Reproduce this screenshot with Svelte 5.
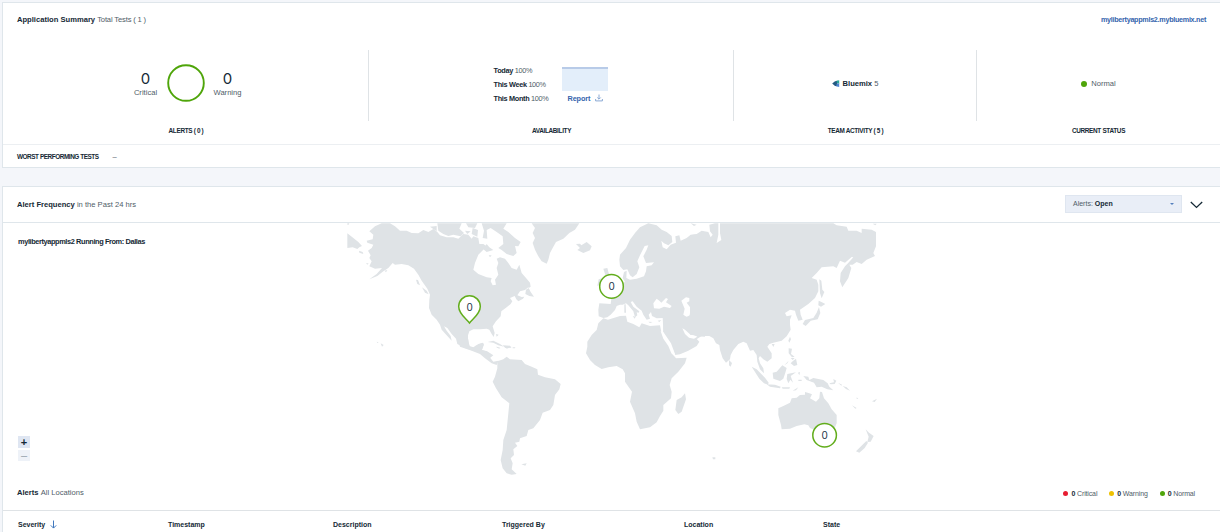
<script>
  const columns = ['Severity', 'Timestamp', 'Description', 'Triggered By', 'Location', 'State'];
  const legend = [
    { label: 'Critical', kind: 'critical' },
    { label: 'Warning', kind: 'warning' },
    { label: 'Normal', kind: 'normal' }
  ];
  const availability = ['Today', 'This Week', 'This Month'];
</script>

<main>
  <section class="card summary">
    <header>
      <h2>Application Summary <span class="tests">Total Tests ( 1 )</span></h2>
      <a class="host" href="#app">mylibertyappmls2.mybluemix.net</a>
    </header>
    <div class="metrics">
      <div class="metric">
        <div class="body alerts">
          <div class="count"><b>0</b><span>Critical</span></div>
          <svg class="ring" width="38" height="38" viewBox="0 0 38 38"><circle cx="19" cy="19" r="17.8" /></svg>
          <div class="count warn"><b>0</b><span>Warning</span></div>
        </div>
        <h3>ALERTS ( 0 )</h3>
      </div>
      <div class="metric">
        <div class="body avail">
          <ul>
            {#each availability as period}
              <li><b>{period}</b> 100%</li>
            {/each}
          </ul>
          <div class="trend">
            <div class="spark"></div>
            <a href="#app">Report
              <svg width="8" height="8" viewBox="0 0 8 8"><path d="M4 .5V5M2.3 3.5 4 5.2 5.7 3.5M.6 5V6.9H7.4V5" /></svg>
            </a>
          </div>
        </div>
        <h3>AVAILABILITY</h3>
      </div>
      <div class="metric">
        <div class="body team">
          <svg width="8" height="8" viewBox="0 0 8 8">
            <path fill="#245a82" d="M.2 3.5 3 1.2 5.5.7V6.3L3 6Z" />
            <path fill="#29a79a" d="M4.5.8 7.2.2V3.8L5 3Z" />
            <path fill="#4c83d2" d="M4.5 4.3 7.2 3.3V7L4.2 6.3Z" />
          </svg>
          <span><b>Bluemix</b> 5</span>
        </div>
        <h3>TEAM ACTIVITY ( 5 )</h3>
      </div>
      <div class="metric">
        <div class="body status"><i class="dot normal"></i><span>Normal</span></div>
        <h3>CURRENT STATUS</h3>
      </div>
    </div>
    <footer><b>WORST PERFORMING TESTS</b><span>–</span></footer>
  </section>

  <section class="card frequency">
    <header>
      <h2>Alert Frequency <span>in the Past 24 hrs</span></h2>
      <div class="tools">
        <button class="select"><span>Alerts: <b>Open</b></span><i></i></button>
        <svg width="13" height="8" viewBox="0 0 13 8"><path d="M.8 1 6.5 6.4 12.2 1" /></svg>
      </div>
    </header>
    <div class="map-area">
      <div class="side">
        <b>mylibertyappmls2 Running From: Dallas</b>
        <div class="zoom"><button>+</button><button class="off">–</button></div>
      </div>
      <svg class="map" width="530" height="253" viewBox="347 223 530 253">
        <!-- North America -->
        <g transform="translate(340 218) scale(.33333)">
          <path d="M22 46 40 60 55 72 66 84 58 88 52 93 38 88 22 90ZM57 98 68 102 70 108 58 104Z" />
          <path d="M125 16 105 25 88 40 100 50 98 64 80 68 82 74 100 80 95 90 84 98 92 112 88 120 95 130 88 145 105 152 126 150 110 168 88 184 112 174 130 160 145 150 158 135 165 140 185 138 205 142 222 152 235 170 245 188 262 212 270 230 268 245 267 270 275 290 290 305 300 320 305 335 320 352 335 368 332 354 320 338 312 325 322 330 335 348 348 362 352 378 375 390 400 398 420 400 432 412 450 420 460 412 445 402 426 396 431 382 428 375 415 378 405 390 390 386 384 370 384 352 388 340 400 334 420 334 440 332 448 335 455 348 461 357 464 345 458 325 468 310 482 295 484 280 500 268 512 258 517 250 510 240 524 234 529 244 535 250 549 242 553 236 545 237 532 232 540 220 555 216 565 208 572 222 582 236 568 234 556 228 558 215 572 206 570 194 560 182 545 165 538 140 530 155 515 150 505 135 495 122 480 118 470 122 475 135 470 150 475 170 465 185 468 200 458 202 452 190 455 180 440 178 415 168 400 155 405 135 415 110 430 95 440 85 430 78 418 78 415 60 400 55 395 62 385 50 370 48 355 62 340 58 320 58 300 52 292 42 280 33 265 42 250 36 235 46 215 45 200 38 180 38 165 25 150 16Z" />
          <path d="M292 16H365L358 32 372 45 362 55 340 50 325 54 310 48 295 38ZM270 26 290 24 290 40ZM378 16H412L405 30 385 28ZM375 38 392 40 382 48ZM398 30 414 36 412 56 395 48Z" />
          <path d="M425 16H500L490 32 505 42 525 60 542 72 535 85 525 84 530 105 520 114 500 108 485 96 475 90 490 78 488 55 470 42 452 30 440 36 442 62 428 60 432 38ZM430 94 440 78 448 88 460 96 440 102ZM446 112 455 112 450 118Z" />
          <path d="M443 372 460 368 480 378 492 386 475 382 460 374ZM494 383 515 387 500 392ZM474 388 482 390 476 392ZM518 388H526L525 391H518ZM228 185 234 186 240 202 232 198ZM246 208 260 218 266 229 255 224ZM134 158 142 156 138 163ZM110 371 116 373 112 375ZM122 376 131 381 126 386ZM468 348 476 350 470 356ZM22 16H28L26 20H22ZM78 136 86 136 82 140Z" />
        </g>
        <!-- Central and South America -->
        <g transform="translate(460 340) scale(.33333)">
          <path d="M-6-2 25-2 28 18 40 22 50 15 68 8 72 12 65 30 82 34 88 50 100 65 115 62 110 75 95 70 75 55 60 42 35 32 0 20Z" />
          <path d="M112 64 130 58 140 50 150 58 185 60 195 72 215 80 232 88 234 104 255 112 285 118 302 132 298 148 285 165 280 195 270 210 248 218 240 240 220 265 205 270 200 288 180 295 178 305 165 308 172 318 160 328 162 345 152 355 158 370 155 388 170 402 155 404 140 400 128 385 122 360 128 330 130 300 140 270 145 220 148 190 125 172 108 145 98 125 105 110 112 85Z" />
          <path d="M184 373 200 370 196 377ZM128 16 150 17 154 23 136 24ZM108 20 120 22 112 24Z" />
        </g>
        <!-- Greenland, Iceland and Europe -->
        <g transform="translate(520 218) scale(.33333)">
          <path d="M35 16H178L165 35 148 45 130 62 108 72 98 90 90 105 85 125 80 137 65 130 55 115 45 95 38 75 45 60 38 45 45 30Z" />
          <path d="M168 78 180 77 184 82 200 72 215 85 210 97 190 105 172 96 180 90ZM250 152 262 150 266 165 272 180 282 195 280 208 256 210 262 190ZM236 184 248 180 248 200 232 203Z" />
          <path d="M298 125 300 110 318 90 330 65 345 45 360 28 385 16 410 22 425 35 440 42 455 54 457 72 445 82 432 76 424 68 428 88 440 94 452 80 468 74 466 55 478 52 482 68 500 60 512 50 545 48V354L520 370 430 370V300L410 301 396 294 393 282 386 290 390 302 380 305 370 290 365 278 350 266 338 250 332 252 340 266 358 280 356 284 350 283 352 292 345 298 340 280 325 262 318 256 308 260 300 260 290 264 285 276 272 290 262 298 250 300 236 295 235 275 238 256 272 258 274 242 262 228 280 220 300 200 315 192 308 180 312 162 320 158 319 180 330 185 350 182 372 175 378 160 380 145 395 142 402 133 378 135 370 115 380 95 385 82 374 84 360 112 352 130 358 148 350 168 338 178 330 172 322 154 310 156 300 145Z" />
          <path d="M313 259 317 259 318 284 313 284ZM338 294 347 296 344 302ZM385 311 398 312 390 315ZM413 308 424 306 418 312ZM512 16 530 20 522 24Z" />
          <path class="sea" d="M400 256 410 242 418 248 424 254 438 240 444 243 438 253 455 264 450 270 432 266 418 272 402 271ZM484 248 498 238 508 240 508 250 500 254 512 270 509 292 500 297 490 290 494 272Z" />
        </g>
        <!-- Africa, Arabia and Madagascar -->
        <g transform="translate(570 310) scale(.33333)">
          <path d="M100 25 114 29 150 18 168 17 172 35 190 42 208 52 215 40 240 48 270 46 274 66 290 90 305 120 318 145 350 143 345 160 325 185 305 205 299 225 305 245 303 265 280 285 280 302 270 318 260 337 240 352 210 358 200 335 195 310 180 275 186 245 165 215 165 190 158 178 140 168 115 172 95 177 75 165 60 150 48 130 52 110 52 95 65 75 80 60 85 40Z" />
          <path d="M278 20 280 66 293 85 305 110 315 135 330 133 355 122 380 108 388 95 375 82 360 82 345 70 338 53 345 58 360 72 380 79 405 80V20ZM345 250 348 268 335 305 325 312 316 300 320 270 335 262Z" />
          <path class="sea" d="M272 64 280 66 303 100 315 132 318 144 304 130 295 108 280 86ZM337 55 345 59 360 73 373 76 382 80 372 86 357 83 345 72Z" />
        </g>
        <!-- Asia -->
        <g transform="translate(690 218) scale(.33333)">
          <path d="M0 52 20 48 35 38 55 42 62 58 68 50 60 40 58 20 75 16H85V50L80 75 94 66 90 45 90 16H430L440 22 470 26 475 38 500 38 515 45 515 32 545 35 558 42 558 85 550 105 555 114 530 125 515 138 500 132 488 140 478 140 484 150 475 180 457 208 450 190 452 165 465 145 474 136 490 118 485 117 465 134 450 128 440 150 430 145 395 148 380 165 365 180 380 185 385 200 385 220 375 240 355 258 330 275 332 290 338 305 325 308 318 290 315 278 300 275 285 285 290 295 305 292 300 305 300 320 302 335 290 355 275 368 250 374 238 378 232 386 245 406 245 421 232 431 220 424 210 414 206 421 210 436 220 451 222 466 210 454 202 431 200 411 190 396 180 398 170 376 160 371 145 378 130 396 122 411 120 424 108 434 98 421 90 396 88 381 78 376 70 361 58 354 30 354 0 350Z" />
          <path d="M388 184 394 188 397 215 403 222 395 241 390 225ZM386 248 393 251 406 258 393 266 385 262ZM387 267 391 285 383 304 362 308 347 324 338 318 345 306 370 300 380 284ZM548 17H560L556 22Z" />
        </g>
        <!-- South-east Asia and Oceania -->
        <g transform="translate(690 330) scale(.33333)">
          <path d="M300 20 303 28 298 38 295 32ZM245 42H254L250 51ZM296 55 306 56 303 72 314 80 306 82 296 70ZM308 94 318 86 322 105 312 108 302 100ZM283 106 296 92 292 100ZM302 84 314 84 308 90ZM117 90 126 99 122 110 117 106ZM185 110 200 118 225 143 236 158 234 164 222 160 208 146ZM230 163 255 164 272 170 270 175 240 170ZM248 128 260 125 277 106 290 114 286 128 280 146 270 153 250 146ZM292 132 318 127 302 138 309 158 301 149 295 160 290 147ZM275 172H300L298 176H278ZM308 182 325 172 318 181ZM324 128 330 126 328 136ZM325 149H335V153H325ZM340 138 355 140 358 150 370 144 400 150 413 160 418 170 430 181 412 178 395 170 380 172 372 158 350 150ZM418 160 432 157 430 147 439 152 434 162 422 163ZM444 158 456 164 454 167ZM458 168 470 172 480 182 468 177ZM486 226 500 234 496 236ZM546 214 561 206 554 216ZM500 202 505 206 500 207ZM67 382H76V388H69Z" />
          <path d="M265 235 280 228 300 218 305 205 320 203 330 195 345 194 345 186 358 190 366 193 360 205 378 215 388 205 390 185 396 186 402 205 415 220 425 238 440 255 440 280 430 304 414 322 388 316 375 300 360 294 355 286 343 283 320 288 300 296 275 298 273 285 265 255ZM527 298 537 308 551 318 542 335 532 336 536 320ZM529 333 534 338 524 354 508 368 498 364Z" />
        </g>
        <!-- Test locations -->
        <path class="pin" d="M469.5 323C466 318.5 458.7 314 458.7 306.5A10.8 10.8 0 0 1 480.3 306.5C480.3 314 473 318.5 469.5 323Z" />
        <circle class="pin" cx="611.5" cy="286.4" r="11.8" />
        <circle class="pin" cx="824.6" cy="435.2" r="11.8" />
        <text x="469.6" y="310.8">0</text>
        <text x="611.6" y="290.3">0</text>
        <text x="824.6" y="439.2">0</text>
      </svg>
    </div>
    <div class="list-head">
      <h2>Alerts <span>All Locations</span></h2>
      <div class="legend">
        {#each legend as item}
          <span><i class="dot {item.kind}"></i><b>0</b> {item.label}</span>
        {/each}
      </div>
    </div>
    <div class="thead">
      {#each columns as column, i}
        <b>{column}{#if i === 0}<svg width="7" height="9" viewBox="0 0 7 9"><path d="M3.5.5V8M.8 5.4 3.5 8.1 6.2 5.4" /></svg>{/if}</b>
      {/each}
    </div>
  </section>
</main>

<style>
  :global(body) { background: #f4f6fa; overflow: hidden; }
  main {
    height: 532px; box-sizing: border-box; padding: 2px 0 0 2px; overflow: hidden;
    font: 7.6px/10px "Liberation Sans", Arial, sans-serif; color: #4f5d68;
  }
  b, h2, h3 { color: #152935; font-weight: 700; }
  h2, h3, ul { margin: 0; padding: 0; }
  h2 { font-size: 7.6px; line-height: 10px; }
  h2 span { font-weight: 400; color: #4f5d68; }
  .tests { letter-spacing: -.15px; }
  a { color: #3564ad; font-weight: 700; text-decoration: none; }
  button { border: 0; padding: 0; font: inherit; color: inherit; }
  svg { display: block; flex: none; }
  .card { background: #fff; border: 1px solid #dfe6eb; border-right: 0; box-sizing: border-box; }
  .summary { height: 166px; margin-bottom: 18px; }
  .summary header { height: 47px; padding: 12px 14px 0; box-sizing: border-box; display: flex; justify-content: space-between; }
  .host { font-size: 7.2px; letter-spacing: -.28px; }
  .metrics { display: grid; grid-template-columns: 366px 365px 243px 1fr; height: 94px; }
  .metric { display: flex; flex-direction: column; align-items: center; justify-content: space-between; }
  .body { height: 71px; width: 100%; box-sizing: border-box; border-right: 1px solid #dfe3e6; display: flex; justify-content: center; align-items: center; }
  .metric:last-child .body { border: 0; }
  h3 { font-size: 6.4px; line-height: 9px; letter-spacing: -.32px; }
  .metric h3 { margin-bottom: 9px; }
  .alerts { gap: 9px; padding-bottom: 6px; }
  .ring circle { fill: none; stroke: #4fa50a; stroke-width: 1.9; }
  .count { width: 24px; display: flex; flex-direction: column; align-items: center; padding-top: 3px; }
  .count.warn { width: 28px; margin-right: -4px; }
  .count b { font: 400 15px/16px Inter, sans-serif; }
  .count span { margin-top: 1px; }
  .avail { gap: 14px; font-size: 7.3px; align-items: flex-start; padding-top: 13px; }
  .avail ul { letter-spacing: -.32px; }
  .avail li { list-style: none; height: 14px; line-height: 15px; white-space: nowrap; }
  .spark { width: 46px; height: 24px; box-sizing: border-box; background: #e3eefa; border-top: 2px solid #b8cbe8; margin-top: 4px; }
  .trend a { display: flex; justify-content: center; gap: 5px; line-height: 15px; letter-spacing: -.12px; }
  .trend svg { margin-top: 3px; }
  .trend path { fill: none; stroke: #6f94c9; stroke-width: .8; }
  .team { gap: 3px; padding-bottom: 3px; }
  .status { gap: 4px; padding-bottom: 3px; }
  .dot { display: inline-block; width: 6px; height: 6px; border-radius: 50%; }
  .dot.critical { background: #e71d32; }
  .dot.warning { background: #efc100; }
  .dot.normal { background: #4fa50a; }
  footer { height: 23px; border-top: 1px solid #eceff2; padding-left: 14px; display: flex; align-items: center; gap: 14px; }
  footer b { font-size: 6.4px; letter-spacing: -.44px; }
  .frequency { height: 400px; }
  .frequency header { height: 36px; box-sizing: border-box; border-bottom: 1px solid #dfe6eb; display: flex; align-items: center; justify-content: space-between; padding: 0 17px 0 14px; }
  .tools { display: flex; align-items: center; gap: 8px; margin-top: -2px; }
  .tools svg { margin-top: 2px; }
  .tools svg path { fill: none; stroke: #152935; stroke-width: 1.3; }
  .select { width: 117px; height: 18px; box-sizing: border-box; border: 1px solid #dfe6f0; background: #e9eef7; display: flex; justify-content: space-between; align-items: center; padding: 0 7px; font-size: 7px; }
  .select i { border: 2px solid transparent; border-top-color: #5580be; border-bottom: 0; }
  .map-area { display: flex; height: 253px; }
  .side { width: 344px; padding: 14px 15px 15px; box-sizing: border-box; display: flex; flex-direction: column; justify-content: space-between; }
  .side > b { font-size: 7.4px; letter-spacing: -.4px; }
  .zoom { width: 12px; display: grid; gap: 2px; }
  .zoom button { height: 12px; background: #dfe6f2; color: #152935; font-size: 11px; font-weight: 700; line-height: 11px; }
  .zoom .off { height: 11px; background: #eef2f8; color: #94a0aa; font-weight: 400; }
  .map path { fill: #dfe3e6; }
  .map .sea { fill: #fff; }
  .map .pin { fill: #fff; stroke: #62ad1c; stroke-width: 1.5; }
  .map text { font: 10px Inter, sans-serif; fill: #23364a; text-anchor: middle; }
  .list-head { height: 35px; box-sizing: border-box; border-bottom: 1px solid #dfe3e6; display: flex; align-items: center; justify-content: space-between; padding: 0 25px 0 14px; }
  .legend { display: flex; gap: 12px; font-size: 7px; letter-spacing: -.14px; padding-top: 1px; }
  .legend .dot { margin-right: 3px; width: 5px; height: 5px; }
  .thead { display: grid; grid-template-columns: 150px 165px 169px 182px 139px 1fr; padding: 9px 0 0 15px; font-size: 7px; }
  .thead b { display: flex; gap: 5px; }
  .thead path { fill: none; stroke: #4178be; stroke-width: 1; }
</style>
